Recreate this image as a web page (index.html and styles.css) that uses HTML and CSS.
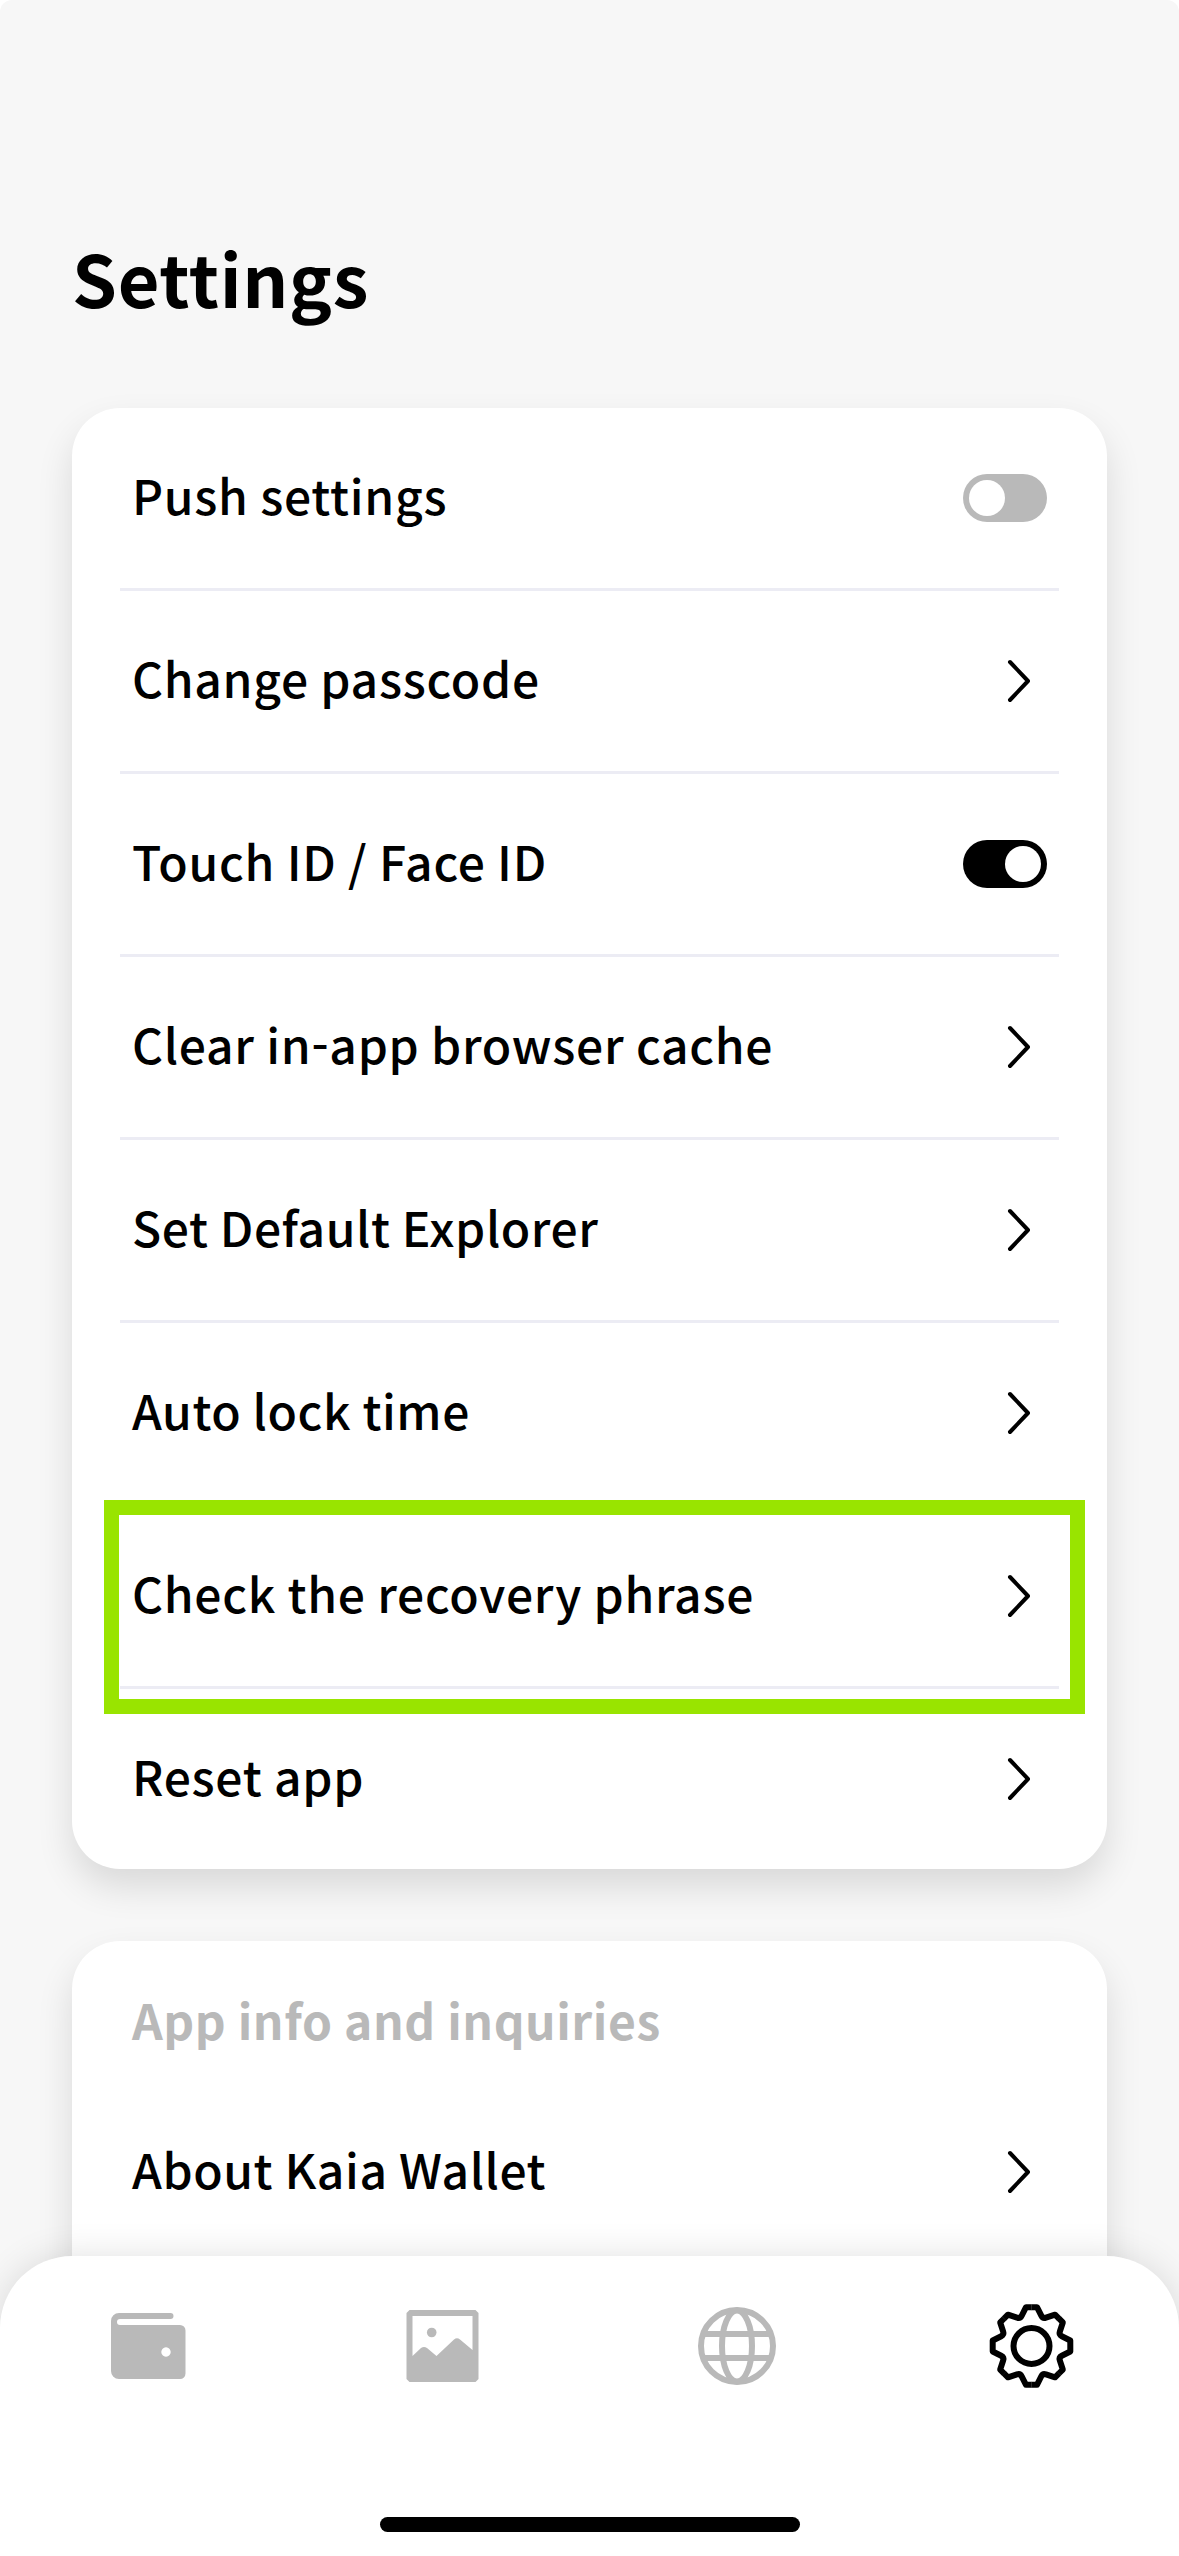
FILE: index.html
```html
<!DOCTYPE html>
<html lang="en">
<head>
<meta charset="utf-8">
<title>Settings</title>
<link rel="stylesheet" href="styles.css">
</head>
<body>
<svg class="defs" width="0" height="0" aria-hidden="true">
  <symbol id="chevron" viewBox="0 0 24 44"><path d="M3 3L21 22L3 41" fill="none" stroke="#000" stroke-width="4" stroke-linecap="round" stroke-linejoin="round"/></symbol>
  <path id="tooth" d="M-.1 -38.8H5.5L9.8 -30.3Q11.3 -27.25 14.5 -28.35L23.55 -31.3L27.5 -27.38"/>
</svg>
<main class="screen">
  <h1 class="title">Settings</h1>

  <section class="card">
    <div class="row"><span class="label">Push settings</span><span class="toggle"><span class="knob"></span></span></div>
    <div class="row"><span class="label">Change passcode</span><svg class="chevron"><use href="#chevron"/></svg></div>
    <div class="row"><span class="label">Touch ID / Face ID</span><span class="toggle toggle-on"><span class="knob"></span></span></div>
    <div class="row"><span class="label">Clear in<span class="hyphen">-</span>app browser cache</span><svg class="chevron"><use href="#chevron"/></svg></div>
    <div class="row"><span class="label label-tight">Set Default Explorer</span><svg class="chevron"><use href="#chevron"/></svg></div>
    <div class="row"><span class="label label-tight">Auto lock time</span><svg class="chevron"><use href="#chevron"/></svg></div>
    <div class="row"><span class="label">Check the recovery phrase</span><svg class="chevron"><use href="#chevron"/></svg><span class="highlight"></span></div>
    <div class="row"><span class="label">Reset app</span><svg class="chevron"><use href="#chevron"/></svg></div>
  </section>

  <section class="card card-info">
    <h2 class="subtitle">App info and inquiries</h2>
    <div class="row"><span class="label label-tight">About Kaia Wallet</span><svg class="chevron"><use href="#chevron"/></svg></div>
  </section>
</main>

<nav class="tabbar">
  <div class="tabs">
    <span class="tab">
      <svg width="96" height="96" viewBox="-49 -48 96 96"><path fill="#b9b9b9" fill-rule="evenodd" d="M-29 -33H22.500a3 3 0 0 1 0 6H-28a3 3 0 0 0 0 6H32a5.500 5.500 0 0 1 5.500 5.500V27.500a5.500 5.500 0 0 1 -5.500 5.500H-29a8 8 0 0 1 -8 -8V-25a8 8 0 0 1 8 -8ZM18 1.300a4.700 4.700 0 1 0 .01 0Z"/></svg>
    </span>
    <span class="tab">
      <svg width="96" height="96" viewBox="-48 -48 96 96"><path fill="#b9b9b9" fill-rule="evenodd" d="M-32.500 -36H33.500L36.500 -33V33L33.500 36H-32.500L-35.500 33V-33ZM-29.500 -30V10L-21 2Q-18 0 -15 2L-5.500 10L12 -6.500Q15 -9 18 -6.500L30.500 4V-30Z"/><circle cx="-10.300" cy="-13.500" r="4.800" fill="#b9b9b9"/></svg>
    </span>
    <span class="tab">
      <svg width="96" height="96" viewBox="-48 -48 96 96"><g fill="none" stroke="#b9b9b9" stroke-width="6"><circle r="36"/><ellipse rx="15" ry="35.500"/><path d="M-34 -12H34M-34 12H34"/></g></svg>
    </span>
    <span class="tab">
      <svg width="96" height="96" viewBox="-47.500 -48 96 96"><g fill="none" stroke="#000" stroke-width="6" stroke-linejoin="round"><circle r="18"/><use href="#tooth"/><use href="#tooth" transform="rotate(45)"/><use href="#tooth" transform="rotate(90)"/><use href="#tooth" transform="rotate(135)"/><use href="#tooth" transform="rotate(180)"/><use href="#tooth" transform="rotate(225)"/><use href="#tooth" transform="rotate(270)"/><use href="#tooth" transform="rotate(315)"/></g></svg>
    </span>
  </div>
  <span class="home-indicator"></span>
</nav>
</body>
</html>
```
FILE: styles.css
```css
* { box-sizing: border-box; }

html { background: #fff; }

body {
  margin: 0;
  width: 1179px;
  height: 2556px;
  overflow: hidden;
  display: grid;
  grid-template-rows: 2256px 300px;
  background: #f7f7f7;
  border-radius: 12px 12px 0 0;
  color: #000;
  font-family: "Noto Sans CJK KR", "Noto Sans", sans-serif;
}

.defs { position: absolute; }

.screen {
  display: flex;
  flex-direction: column;
  height: 2256px;
  padding: 225px 72px 0;
}

.title {
  flex: none;
  margin: 0;
  height: 183px;
  font-size: 72px;
  font-weight: 700;
  line-height: 104px;
  letter-spacing: 0.7px;
}

.card {
  flex: none;
  background: #fff;
  border-radius: 48px;
  padding: 0 48px;
  box-shadow: 0 18px 36px rgba(0, 0, 0, 0.12);
}

.card-info {
  margin-top: 72px;
  height: 500px;
}

.row {
  position: relative;
  display: flex;
  align-items: center;
  justify-content: space-between;
  height: 180px;
  padding: 0 12px;
}

.row + .row {
  height: 183px;
  border-top: 3px solid #ececf4;
}

.label {
  font-size: 48px;
  font-weight: 500;
  line-height: 72px;
  letter-spacing: 0.73px;
  padding-bottom: 8px;
}

.label-tight { letter-spacing: 0.55px; }

.hyphen {
  position: relative;
  top: -3px;
}

.chevron {
  width: 24px;
  height: 44px;
  margin-right: 16px;
}

.toggle {
  display: flex;
  width: 84px;
  height: 48px;
  padding: 6px;
  border-radius: 24px;
  background: #b9b9b9;
}

.toggle-on {
  justify-content: flex-end;
  background: #000;
}

.knob {
  width: 36px;
  height: 36px;
  border-radius: 50%;
  background: #fff;
}

.highlight {
  position: absolute;
  top: -6px;
  left: -16px;
  width: 981px;
  height: 214px;
  border: 15px solid #99e400;
}

.subtitle {
  margin: 0;
  padding: 42px 12px 0;
  height: 141px;
  color: #b9b9b9;
  font-size: 48px;
  font-weight: 700;
  line-height: 72px;
  letter-spacing: 0.55px;
}

.tabbar {
  position: relative;
  z-index: 1;
  display: flex;
  flex-direction: column;
  align-items: center;
  justify-content: space-between;
  padding: 42px 0 24px;
  background: #fff;
  border-radius: 72px 72px 0 0;
  box-shadow: 0 0 36px rgba(0, 0, 0, 0.12);
}

.tabs {
  display: grid;
  grid-template-columns: repeat(4, 1fr);
  width: 100%;
}

.tab {
  display: flex;
  justify-content: center;
}

.home-indicator {
  width: 420px;
  height: 15px;
  border-radius: 8px;
  background: #000;
}
```
